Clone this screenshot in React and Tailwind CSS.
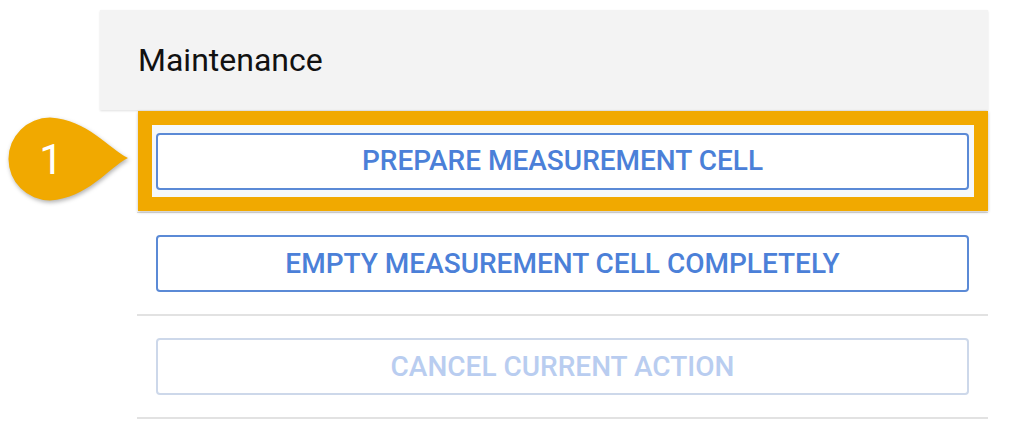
export default function App() {
  return (
    <div className="relative w-[1024px] h-[424px] bg-white overflow-hidden" style={{ fontFamily: 'Roboto, "Liberation Sans", sans-serif' }}>
      <div className="ml-[100px] mt-[10px] w-[888px]">
        <div className="h-[100px] bg-[#f3f3f3] flex items-center pl-[38px] shadow-[0_1px_2px_rgba(0,0,0,0.12)]">
          <span className="text-[32px] text-[#111]">Maintenance</span>
        </div>
        <div className="ml-[37px]">
          <div className="relative h-[103px] border-b border-[#dedede] flex items-center px-[19px]">
            <div className="absolute left-[1px] top-[1px] right-0 bottom-[1px] border-[14px] border-[#f1a900] bg-[#f5f8fa] shadow-[0_1px_3px_rgba(0,0,0,0.25)]"></div>
            <button className="relative w-full h-[57px] rounded-[4px] border-2 border-[#5b8ad6] bg-white text-[28px] font-medium text-[#4b80d8]">
              PREPARE MEASUREMENT CELL
            </button>
          </div>
          <div className="h-[103px] border-b-2 border-[#e2e2e2] flex items-center px-[19px]">
            <button className="w-full h-[57px] rounded-[4px] border-2 border-[#5b8ad6] bg-white text-[28px] font-medium text-[#4b80d8]">
              EMPTY MEASUREMENT CELL COMPLETELY
            </button>
          </div>
          <div className="h-[103px] border-b-2 border-[#e2e2e2] flex items-center px-[19px]">
            <button className="w-full h-[57px] rounded-[4px] border-2 border-[#cdd8ea] bg-white text-[28px] font-medium text-[#b9cdf0]">
              CANCEL CURRENT ACTION
            </button>
          </div>
        </div>
      </div>
      <div className="absolute left-0 top-[110px] w-[140px] h-[100px]">
        <svg width="140" height="100" viewBox="0 0 140 100" className="absolute inset-0" style={{ filter: 'drop-shadow(1px 2px 2px rgba(0,0,0,0.3))' }}>
          <path d="M128 48 C 108 38, 88 10, 50 7.5 A 41.5 41.5 0 1 0 50 90.5 C 88 88, 108 58, 128 48 Z" fill="#f1a900" />
        </svg>
        <span className="absolute left-[35px] top-[26px] w-[32px] text-center text-[42px] leading-[48px] font-normal text-white">1</span>
      </div>
    </div>
  )
}
